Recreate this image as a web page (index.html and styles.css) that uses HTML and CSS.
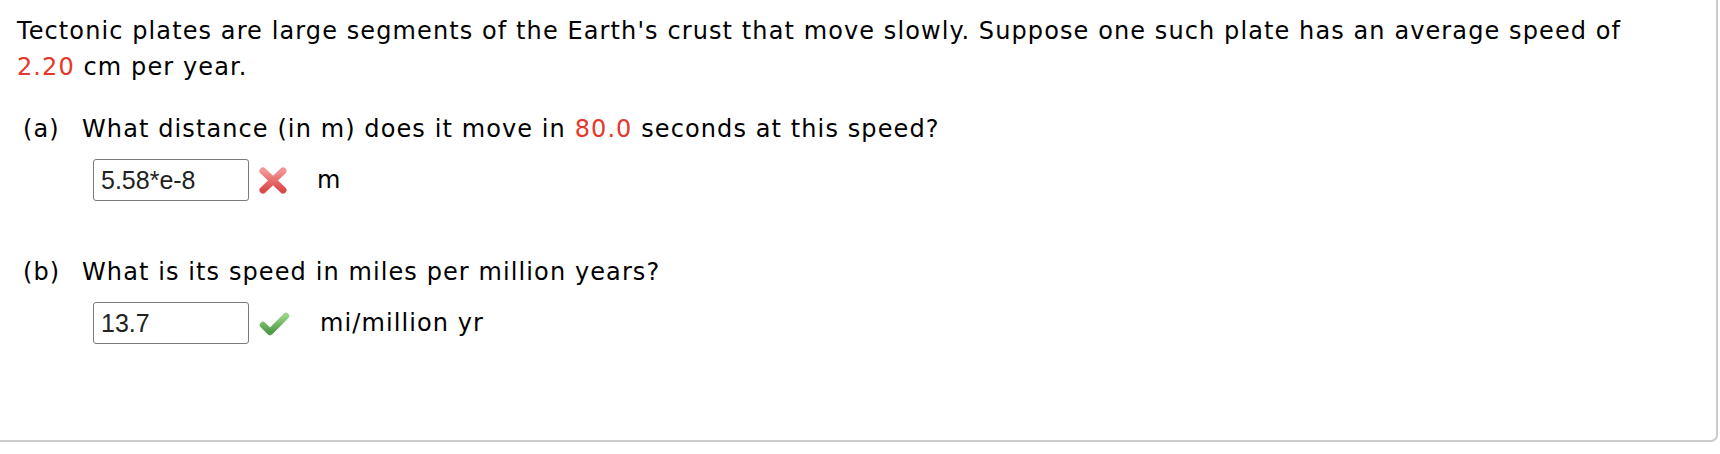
FILE: index.html
```html
<!DOCTYPE html>
<html>
<head>
<meta charset="utf-8">
<link rel="stylesheet" href="styles.css">
</head>
<body>
<div class="card">
  <p class="stem">Tectonic plates are large segments of the Earth's crust that move slowly. Suppose one such plate has an average speed of <span class="red">2.20</span> cm per year.</p>
  <div class="part part-a">
    <div class="question"><span class="label">(a)</span><span class="qtext">What distance (in m) does it move in <span class="red">80.0</span> seconds at this speed?</span></div>
    <div class="answer">
      <div class="field">5.58*e-8</div>
      <svg class="icon" width="28" height="27" viewBox="0 0 28 27">
        <defs>
          <linearGradient id="gx" x1="0" y1="0" x2="0" y2="1">
            <stop offset="0" stop-color="#f39494"/>
            <stop offset="1" stop-color="#d94a4a"/>
          </linearGradient>
        </defs>
        <path d="M4 4 L24 23 M24 4 L4 23" stroke="url(#gx)" stroke-width="7" stroke-linecap="round" fill="none"/>
      </svg>
      <span class="unit">m</span>
    </div>
  </div>
  <div class="part part-b">
    <div class="question"><span class="label">(b)</span><span class="qtext">What is its speed in miles per million years?</span></div>
    <div class="answer">
      <div class="field">13.7</div>
      <svg class="icon" width="31" height="27" viewBox="0 0 31 27">
        <defs>
          <linearGradient id="gc" x1="0" y1="0" x2="0" y2="1">
            <stop offset="0" stop-color="#96d486"/>
            <stop offset="1" stop-color="#4f9a46"/>
          </linearGradient>
        </defs>
        <path d="M4 15 L11 22 L27 6" stroke="url(#gc)" stroke-width="6.5" stroke-linecap="round" stroke-linejoin="round" fill="none"/>
      </svg>
      <span class="unit">mi/million yr</span>
    </div>
  </div>
</div>
</body>
</html>
```
FILE: styles.css
```css
html, body {
  margin: 0;
  padding: 0;
  background: #ffffff;
}
body {
  font-family: "DejaVu Sans", Verdana, sans-serif;
  font-size: 24px;
  line-height: 36px;
  letter-spacing: 1.1px;
  color: #000;
}
.card {
  box-sizing: border-box;
  margin: -2px 0 0 -2px;
  width: 1720px;
  height: 444px;
  border: 2px solid #cccccc;
  border-radius: 0 0 7px 0;
  padding: 13px 0 0 17px;
}
.stem {
  margin: 0;
  width: 1640px;
}
.red {
  color: #e5382c;
}
.part {
  margin-top: 26px;
}
.part-b {
  margin-top: 53px;
}
.question {
  display: flex;
  padding-left: 6px;
}
.label {
  width: 59px;
  flex: none;
}
.answer {
  display: flex;
  align-items: center;
  margin-top: 12px;
  padding-left: 76px;
}
.field {
  box-sizing: border-box;
  width: 156px;
  height: 42px;
  border: 1px solid #7a7a7a;
  border-radius: 3px;
  padding: 0 0 0 7px;
  font-family: "Liberation Sans", Arial, sans-serif;
  font-size: 25px;
  letter-spacing: 0;
  line-height: 40px;
  color: #222;
}
.icon {
  margin-left: 10px;
  flex: none;
}
.unit {
  margin-left: 30px;
}
```
